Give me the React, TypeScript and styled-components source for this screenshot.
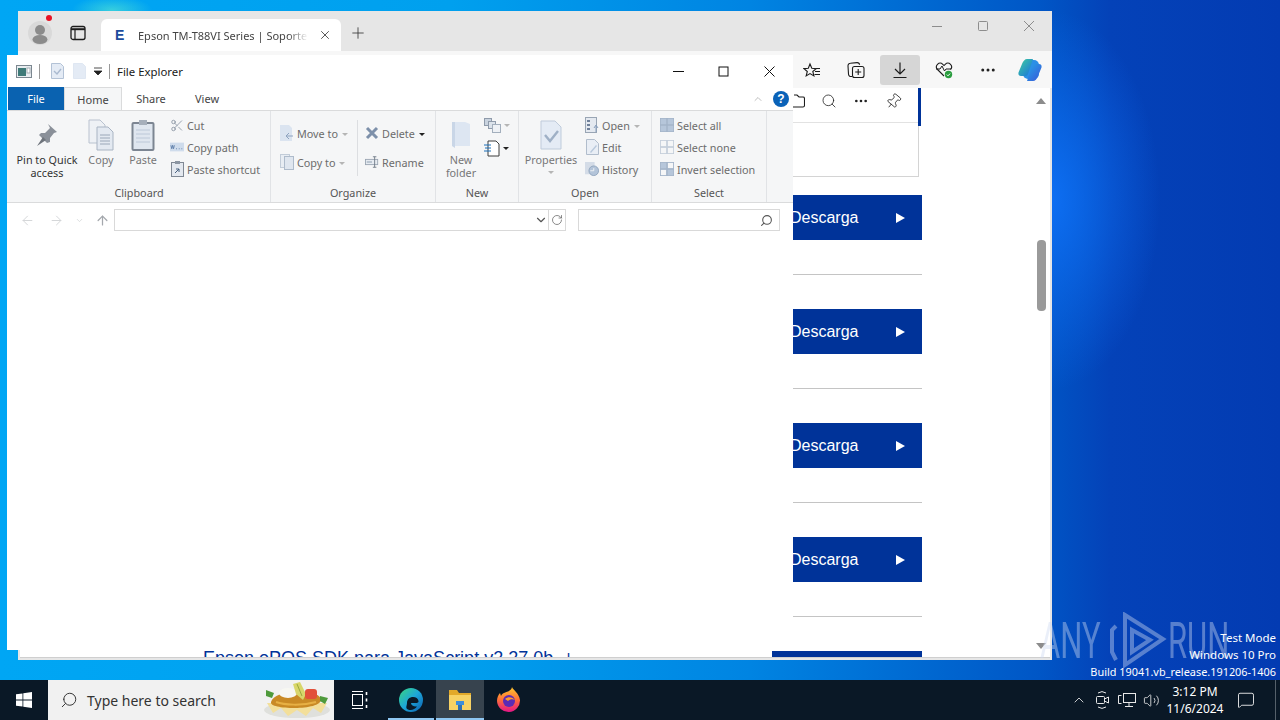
import React from 'react';
import styled, { createGlobalStyle } from 'styled-components';
import {
  ArrowLeft,
  ArrowRight,
  ArrowUp,
  ChevronDown,
  ChevronUp,
  MessageSquare,
  MoreHorizontal,
  Pin,
  Plus,
  RotateCw,
  Scissors,
  Search,
  Volume2,
  X,
} from 'lucide-react';

const UI_FONT = '"Noto Sans", "Open Sans", sans-serif';

const GlobalStyle = createGlobalStyle`
  html, body {
    margin: 0;
    padding: 0;
    overflow: hidden;
  }
  * {
    box-sizing: border-box;
  }
`;

const Desktop = styled.div`
  width: 1280px;
  height: 720px;
  display: flex;
  flex-direction: column;
  overflow: hidden;
  font-family: ${UI_FONT};
`;

const Wallpaper = styled.div`
  position: relative;
  flex: 1;
  background:
    radial-gradient(ellipse 110px 190px at 1050px 200px, rgba(14, 112, 245, 0.95), rgba(14, 112, 245, 0) 100%),
    radial-gradient(ellipse 40px 14px at 112px 10px, rgba(60, 210, 220, 0.9), rgba(60, 210, 220, 0) 100%),
    linear-gradient(90deg, #00a6f4 0, #00a0ee 450px, #0084e2 750px, #0056c6 1040px, #0442b8 1110px, #033bb2 1280px);
`;

/* browser window behind the explorer */
const BrowserWindow = styled.div`
  position: absolute;
  left: 18px;
  top: 11px;
  width: 1034px;
  height: 649px;
  display: flex;
  flex-direction: column;
  background: #e6e6e6;
  overflow: hidden;
`;

const TabStrip = styled.div`
  height: 40px;
  display: flex;
  align-items: flex-end;
  padding-left: 8px;
`;

const StripSlot = styled.div<{ $w: number }>`
  position: relative;
  width: ${(p) => p.$w}px;
  height: 34px;
  display: flex;
  align-items: center;
  justify-content: center;
  margin-bottom: 1px;
  color: #333;
`;

const NotifyDot = styled.span`
  position: absolute;
  top: -1px;
  left: 20px;
  width: 6px;
  height: 6px;
  border-radius: 50%;
  background: #e81123;
`;

const BrowserTab = styled.div`
  width: 240px;
  height: 32px;
  display: flex;
  align-items: center;
  background: #fff;
  border-radius: 6px 6px 0 0;
  padding: 0 9px 0 14px;
  margin-left: -1px;
`;

const TabFavicon = styled.span`
  width: 23px;
  font: bold 14px "Liberation Sans", sans-serif;
  color: #1d4c9c;
`;

const TabTitle = styled.span`
  width: 170px;
  font-size: 11px;
  white-space: nowrap;
  overflow: hidden;
  color: #444;
  -webkit-mask-image: linear-gradient(90deg, #000 150px, transparent 170px);
  mask-image: linear-gradient(90deg, #000 150px, transparent 170px);
`;

const TabClose = styled.span`
  margin-left: auto;
  display: flex;
  color: #333;
`;

const WinButtons = styled.div`
  margin-left: auto;
  align-self: flex-start;
  display: flex;
  color: #8d8d8d;
`;

const WinButton = styled.span`
  width: 46px;
  height: 30px;
  display: flex;
  align-items: center;
  justify-content: center;
`;

const BrowserToolbar = styled.div`
  height: 37px;
  display: flex;
  align-items: center;
  justify-content: flex-end;
  padding-right: 2px;
  background: #f7f7f7;
`;

const ToolButton = styled.span<{ $active?: boolean; $tight?: boolean }>`
  width: 40px;
  height: 30px;
  margin-left: ${(p) => (p.$tight ? 2 : 4)}px;
  display: flex;
  align-items: center;
  justify-content: center;
  border-radius: 3px;
  color: #222;
  background: ${(p) => (p.$active ? '#d6d6d6' : 'transparent')};
`;

const PageArea = styled.div`
  flex: 1;
  display: flex;
  margin: 0 2px 2px;
  background: #fff;
  border-bottom: 1px solid #cfcfcf;
  overflow: hidden;
`;

const PageColumn = styled.div`
  width: 719px;
  margin-left: 183px;
  display: flex;
  flex-direction: column;
`;

const SidePanel = styled.div`
  flex-shrink: 0;
  height: 89px;
  margin-right: 3px;
  margin-bottom: 18px;
  border-right: 1px solid #d4d4d4;
  border-bottom: 1px solid #d4d4d4;
  position: relative;
`;

const PanelTools = styled.div`
  height: 35px;
  display: flex;
  align-items: center;
  justify-content: flex-end;
  gap: 16px;
  padding: 0 16px 8px 0;
  border-bottom: 1px solid #e2e2e2;
  color: #222;
`;

const PanelAccent = styled.span`
  position: absolute;
  top: 0;
  right: -3px;
  width: 3px;
  height: 38px;
  background: #003399;
`;

const DownloadRow = styled.div<{ $last?: boolean }>`
  display: flex;
  align-items: flex-start;
  flex-shrink: 0;
  padding-bottom: ${(p) => (p.$last ? 0 : 34)}px;
  margin-bottom: ${(p) => (p.$last ? 0 : 34)}px;
  border-bottom: ${(p) => (p.$last ? 'none' : '1px solid #c4c4c4')};
`;

const DownloadLink = styled.a`
  font: 18px/15px "Liberation Sans", sans-serif;
  color: #003399;
  white-space: nowrap;
`;

const DownloadButton = styled.span`
  margin-left: auto;
  width: 150px;
  height: 45px;
  flex-shrink: 0;
  display: flex;
  align-items: center;
  justify-content: space-between;
  padding: 0 17px 0 18px;
  background: #003399;
  color: #fff;
  font: 16px "Liberation Sans", sans-serif;
`;

const PlayMark = styled.span`
  width: 0;
  height: 0;
  border-left: 9px solid #fff;
  border-top: 5.5px solid transparent;
  border-bottom: 5.5px solid transparent;
`;

const ScrollTrack = styled.div`
  width: 12px;
  margin-left: auto;
  margin-right: 3px;
  display: flex;
  flex-direction: column;
  align-items: center;
  padding-top: 10px;
`;

const ScrollArrowUp = styled.span`
  border-left: 5px solid transparent;
  border-right: 5px solid transparent;
  border-bottom: 6px solid #8c8c8c;
`;

const ScrollThumb = styled.span`
  width: 9px;
  height: 71px;
  margin-top: 136px;
  border-radius: 4px;
  background: #9a9a9a;
`;

const ScrollArrowDown = styled.span`
  margin-top: auto;
  margin-bottom: 8px;
  border-left: 5px solid transparent;
  border-right: 5px solid transparent;
  border-top: 6px solid #8c8c8c;
`;

/* file explorer, on top */
const ExplorerWindow = styled.div`
  position: absolute;
  left: 7px;
  top: 55px;
  width: 786px;
  height: 595px;
  display: flex;
  flex-direction: column;
  background: #fff;
`;

const TitleBar = styled.div`
  height: 32px;
  display: flex;
  align-items: center;
  padding-left: 9px;
  color: #1a1a1a;
`;

const TitleSep = styled.span<{ $ml: number }>`
  width: 1px;
  height: 15px;
  margin-left: ${(p) => p.$ml}px;
  background: #9a9a9a;
`;

const TitleText = styled.span`
  margin-left: 7px;
  font-size: 11.4px;
`;

const QuickIcon = styled.span<{ $ml: number }>`
  display: flex;
  margin-left: ${(p) => p.$ml}px;
`;

const ExplorerControls = styled.div`
  margin-left: auto;
  display: flex;
  padding-right: 1px;
  color: #111;
`;

const ExplorerControl = styled.span`
  width: 45.5px;
  height: 32px;
  display: flex;
  align-items: center;
  justify-content: center;
`;

const TabRow = styled.div`
  height: 23px;
  display: flex;
  align-items: stretch;
  padding-left: 1px;
  position: relative;
`;

const RibbonTab = styled.span<{ $w: number; $kind?: 'file' | 'active' }>`
  width: ${(p) => p.$w}px;
  display: flex;
  align-items: center;
  justify-content: center;
  font-size: 11px;
  color: ${(p) => (p.$kind === 'file' ? '#fff' : '#444')};
  background: ${(p) => (p.$kind === 'file' ? '#0a62b0' : p.$kind === 'active' ? '#f5f6f7' : 'transparent')};
  border: ${(p) => (p.$kind === 'active' ? '1px solid #dadbdc' : 'none')};
  border-bottom: none;
`;

const RibbonRight = styled.div`
  margin-left: auto;
  display: flex;
  align-items: center;
  gap: 9px;
  padding-right: 4px;
  color: #a9a9a9;
`;

const HelpBadge = styled.span`
  width: 16px;
  height: 16px;
  border-radius: 50%;
  background: #0a62b8;
  color: #fff;
  display: flex;
  align-items: center;
  justify-content: center;
  font: bold 12px "Liberation Sans", sans-serif;
`;

const Ribbon = styled.div`
  height: 93px;
  display: flex;
  padding-left: 1px;
  padding-right: 26px;
  background: #f5f6f7;
  border-top: 1px solid #dadbdc;
  border-bottom: 1px solid #dadbdc;
`;

const Group = styled.div<{ $w: number }>`
  width: ${(p) => p.$w}px;
  display: flex;
  flex-direction: column;
  padding-top: 3px;
  border-right: 1px solid #e1e3e6;
`;

const GroupBody = styled.div<{ $pl?: number }>`
  height: 66px;
  display: flex;
  padding-left: ${(p) => p.$pl ?? 0}px;
`;

const GroupLabel = styled.div`
  height: 16px;
  margin-top: 5px;
  text-align: center;
  font-size: 10.8px;
  line-height: 16px;
  color: #555;
`;

const LargeButton = styled.div<{ $w: number; $dim?: boolean }>`
  width: ${(p) => p.$w}px;
  display: flex;
  flex-direction: column;
  align-items: center;
  padding-top: 3px;
  text-align: center;
  font-size: 10.8px;
  line-height: 13px;
  color: ${(p) => (p.$dim ? '#777' : '#333')};
`;

const LargeIcon = styled.span`
  height: 36px;
  display: flex;
  align-items: center;
  justify-content: center;
  flex-shrink: 0;
`;

const SmallColumn = styled.div<{ $w?: number; $gap?: number; $pt?: number; $ml?: number; $divider?: boolean }>`
  width: ${(p) => (p.$w !== undefined ? `${p.$w}px` : 'auto')};
  display: flex;
  flex-direction: column;
  gap: ${(p) => p.$gap ?? 0}px;
  padding-top: ${(p) => p.$pt ?? 0}px;
  height: ${(p) => (p.$divider ? '56px' : 'auto')};
  margin-top: ${(p) => (p.$divider ? '6px' : '0')};
  margin-left: ${(p) => p.$ml ?? 0}px;
  border-right: ${(p) => (p.$divider ? '1px solid #dcdee1' : 'none')};
`;

const SmallRow = styled.div`
  height: 22px;
  display: flex;
  align-items: center;
  gap: 3px;
  font-size: 10.8px;
  white-space: nowrap;
  color: #6c6c6c;
`;

const SmallIcon = styled.span`
  width: 14px;
  height: 16px;
  display: flex;
  align-items: center;
  justify-content: center;
  flex-shrink: 0;
`;

const CaretDown = styled.span<{ $dark?: boolean; $ml?: number; $mt?: number }>`
  display: inline-block;
  vertical-align: middle;
  margin-left: ${(p) => p.$ml ?? 0}px;
  margin-top: ${(p) => p.$mt ?? 0}px;
  border-left: 3px solid transparent;
  border-right: 3px solid transparent;
  border-top: 3px solid ${(p) => (p.$dark ? '#222' : '#b5b5b5')};
`;

const AddressBar = styled.div`
  height: 34px;
  display: flex;
  align-items: center;
`;

const NavSet = styled.div`
  width: 107px;
  display: flex;
  align-items: center;
  padding-left: 13px;
  gap: 14px;
  color: #d2d4d6;
`;

const AddressBox = styled.div`
  width: 452px;
  height: 22px;
  display: flex;
  align-items: center;
  justify-content: flex-end;
  border: 1px solid #d9d9d9;
  color: #555;
`;

const RefreshCell = styled.span`
  width: 17px;
  height: 20px;
  margin-left: 0;
  display: flex;
  align-items: center;
  justify-content: center;
  border-left: 1px solid #d9d9d9;
  color: #666;
`;

const SearchBox = styled.div`
  width: 202px;
  height: 22px;
  margin-left: 12px;
  display: flex;
  align-items: center;
  justify-content: flex-end;
  padding-right: 6px;
  border: 1px solid #d9d9d9;
  color: #555;
`;

/* desktop overlays */
const Watermark = styled.div`
  position: absolute;
  left: 1040px;
  top: 612px;
  display: flex;
  align-items: center;
  color: rgba(205, 218, 240, 0.42);
  font: 400 50px/56px Roboto, sans-serif;
`;

const WatermarkWord = styled.span<{ $w: number }>`
  display: inline-block;
  width: ${(p) => p.$w}px;
  transform: scaleX(0.62);
  transform-origin: left center;
  white-space: nowrap;
`;

const TestMode = styled.div`
  position: absolute;
  right: 4px;
  bottom: 0;
  text-align: right;
  color: #fff;
  font-size: 11.5px;
  line-height: 17px;
`;

const BuildLine = styled.span`
  font-size: 10.9px;
`;

/* taskbar */
const Taskbar = styled.div`
  height: 40px;
  display: flex;
  align-items: stretch;
  background: #0a1826;
  color: #fff;
`;

const StartButton = styled.div`
  width: 48px;
  display: flex;
  align-items: center;
  justify-content: center;
`;

const SearchField = styled.div`
  width: 286px;
  display: flex;
  align-items: center;
  padding-left: 12px;
  background: #f1f1f1;
  color: #333;
  font-size: 14px;
`;

const SearchHint = styled.span`
  margin-left: 9px;
`;

const SearchDoodle = styled.span`
  display: flex;
  margin-left: auto;
  margin-right: 2px;
`;

const TaskItem = styled.div<{ $w: number; $active?: boolean; $open?: boolean }>`
  position: relative;
  width: ${(p) => p.$w}px;
  display: flex;
  align-items: center;
  justify-content: center;
  background: ${(p) => (p.$active ? '#37434e' : 'transparent')};
  &::after {
    content: '';
    display: ${(p) => (p.$open ? 'block' : 'none')};
    position: absolute;
    left: ${(p) => (p.$active ? 0 : 2)}px;
    right: ${(p) => (p.$active ? 0 : 2)}px;
    bottom: 0;
    height: 2px;
    background: #8fc7f2;
  }
`;

const Tray = styled.div`
  margin-left: auto;
  display: flex;
  align-items: center;
  padding-right: 4px;
`;

const TraySlot = styled.span`
  width: 24px;
  display: flex;
  justify-content: center;
  color: #e8e8e8;
`;

const Clock = styled.div`
  width: 72px;
  margin-left: -4px;
  text-align: center;
  font-size: 12px;
  line-height: 17px;
  color: #fff;
`;

const NotifySlot = styled.span`
  width: 45px;
  height: 40px;
  display: flex;
  align-items: center;
  justify-content: center;
  padding-right: 14px;
  border-right: 1px solid #55606a;
`;

/* drawn icons */
const PinIcon = () => (
  <svg width="24" height="26" viewBox="0 0 24 26">
    <path d="M13 2l9 8-3 1-4 5 0 4-3 1-8-8 2-2 4 0 5-5z" fill="#8a9099" />
    <path d="M8 15l-6 9 9-6z" fill="#6e747c" />
  </svg>
);

const CopyDocs = () => (
  <svg width="26" height="32" viewBox="0 0 26 32">
    <path d="M1 1h11l5 5v18H1z" fill="#eef1f5" stroke="#b9c2cf" />
    <path d="M9 8h11l5 5v18H9z" fill="#e3e9f1" stroke="#a9b4c3" />
    <path d="M12 16h10M12 19h10M12 22h10M12 25h10" stroke="#9aa7b8" />
  </svg>
);

const PasteBoard = () => (
  <svg width="24" height="32" viewBox="0 0 24 32">
    <rect x="1.5" y="4" width="21" height="27" rx="1" fill="#dfe6ef" stroke="#7c8592" strokeWidth="2" />
    <rect x="8" y="1" width="8" height="5" fill="#a6afbb" />
    <path d="M5 11h14M5 15h14M5 19h14M5 23h14" stroke="#bcc8d8" />
  </svg>
);

const CopyPathIcon = () => (
  <svg width="16" height="10" viewBox="0 0 16 10">
    <rect width="16" height="10" fill="#cfdcec" />
    <path d="M1 3l1 4 1-4 1 4 1-4M7 7h1M10 7h1M13 7h1" stroke="#5c7da8" fill="none" />
  </svg>
);

const ShortcutIcon = () => (
  <svg width="13" height="16" viewBox="0 0 13 16">
    <rect x="0.5" y="1.5" width="12" height="14" fill="#e3e8ef" stroke="#7f8894" />
    <rect x="4" y="0" width="5" height="3" fill="#8b95a2" />
    <path d="M4 12l4-4M5 8h3v3" stroke="#47607f" fill="none" />
  </svg>
);

const MoveIcon = () => (
  <svg width="14" height="16" viewBox="0 0 14 16">
    <path d="M0 0h9l3 3v13H0z" fill="#dbe4f0" />
    <path d="M6 11h7M6 11l3-3M6 11l3 3" stroke="#8ea3bf" fill="none" />
  </svg>
);

const CopyToIcon = () => (
  <svg width="14" height="16" viewBox="0 0 14 16">
    <rect x="0.5" y="0.5" width="9" height="13" fill="#e8edf3" stroke="#c2ccd8" />
    <rect x="4.5" y="2.5" width="9" height="13" fill="#dfe6ef" stroke="#aebbcb" />
  </svg>
);

const DeleteIcon = () => (
  <svg width="14" height="14" viewBox="0 0 14 14">
    <path d="M2 2l10 10M12 2L2 12" stroke="#7d90aa" strokeWidth="3" />
  </svg>
);

const RenameIcon = () => (
  <svg width="16" height="14" viewBox="0 0 16 14">
    <rect x="0.5" y="4" width="14" height="6" fill="#e6ebf1" stroke="#98a3b1" />
    <path d="M2 7h6" stroke="#8494a8" />
    <path d="M9 1h4M11 1v12M9 13h4" stroke="#6b7684" fill="none" />
  </svg>
);

const NewFolderIcon = () => (
  <svg width="24" height="30" viewBox="0 0 24 30">
    <path d="M3 2h13l5 2v22l-18 0z" fill="#dde6f2" />
    <path d="M3 2h3v26l-3-2z" fill="#c9d6e7" />
  </svg>
);

const NewItemIcon = () => (
  <svg width="17" height="15" viewBox="0 0 17 15">
    <rect x="0.5" y="0.5" width="7" height="7" fill="#c9d3df" stroke="#8f9bab" />
    <rect x="4.5" y="3.5" width="7" height="7" fill="#dbe2ea" stroke="#8f9bab" />
    <rect x="8.5" y="6.5" width="8" height="8" fill="#eef1f5" stroke="#a3afbd" />
  </svg>
);

const EasyAccessIcon = () => (
  <svg width="16" height="17" viewBox="0 0 16 17">
    <path d="M4 1h8l3 3v12H4z" fill="#fff" stroke="#3d3d3d" />
    <path d="M0 5h7M1 8h6M0 11h7" stroke="#1b6fb8" />
  </svg>
);

const PropertiesIcon = () => (
  <svg width="22" height="30" viewBox="0 0 22 30">
    <path d="M1 1h14l6 6v22H1z" fill="#e4ebf5" stroke="#bfcbdb" />
    <path d="M5 15l5 6 8-10" fill="none" stroke="#9fb0c6" strokeWidth="2.4" />
  </svg>
);

const OpenIcon = () => (
  <svg width="14" height="16" viewBox="0 0 14 16">
    <rect x="0.5" y="0.5" width="11" height="15" fill="#e4e9f0" stroke="#99a5b4" />
    <path d="M2 3h3v2H2zM2 7h3v2H2zM2 11h3v2H2z" fill="#6f8099" />
    <path d="M11 15V9M9 11l2-3 2 3" stroke="#8aa0bd" fill="none" />
  </svg>
);

const EditIcon = () => (
  <svg width="13" height="16" viewBox="0 0 13 16">
    <path d="M0.5 0.5h8l4 4v11H0.5z" fill="#e9eef5" stroke="#b1bdcc" />
    <path d="M4 13l6-7 1 1-6 7z" fill="#b8c8dc" />
  </svg>
);

const HistoryIcon = () => (
  <svg width="16" height="16" viewBox="0 0 16 16">
    <rect width="11" height="14" fill="#d4dce7" />
    <circle cx="10" cy="10" r="5.5" fill="#b3c4d9" stroke="#8ea2bc" />
    <path d="M6 10h4V7" stroke="#f5f6f7" fill="none" />
  </svg>
);

const SelectGrid = ({ fill, stroke, invert }: { fill: string; stroke: string; invert?: boolean }) => (
  <svg width="16" height="16" viewBox="0 0 16 16">
    <rect x="0.5" y="0.5" width="7" height="7" fill={fill} stroke={stroke} />
    <rect x="8.5" y="0.5" width="7" height="7" fill={invert ? '#f5f6f7' : fill} stroke={stroke} />
    <rect x="0.5" y="8.5" width="7" height="7" fill={invert ? '#f5f6f7' : fill} stroke={stroke} />
    <rect x="8.5" y="8.5" width="7" height="7" fill={fill} stroke={stroke} />
  </svg>
);

const ExplorerAppIcon = () => (
  <svg width="16" height="13" viewBox="0 0 16 13">
    <rect x="0.5" y="0.5" width="15" height="12" fill="#e9edf0" stroke="#7c8790" />
    <rect x="2" y="3" width="8" height="8" fill="#3f7a78" />
    <rect x="11" y="3" width="3" height="5" fill="#fff" stroke="#a5adb3" />
  </svg>
);

const QuickDoc = ({ check }: { check?: boolean }) => (
  <svg width="13" height="16" viewBox="0 0 13 16">
    <path d="M0.5 0.5h9l3 3v12H0.5z" fill="#e4ebf5" stroke={check ? '#b3c2d6' : '#dfe7f2'} />
    {check && <path d="M3 8l3 3 4-5" stroke="#a9b9cf" fill="none" strokeWidth="1.4" />}
  </svg>
);

const ProfileIcon = () => (
  <svg width="24" height="24" viewBox="0 0 24 24">
    <circle cx="12" cy="12" r="12" fill="#d9d9d9" />
    <circle cx="12" cy="9" r="5" fill="#8b8b8b" />
    <ellipse cx="12" cy="18.5" rx="7.5" ry="4.5" fill="#8b8b8b" />
  </svg>
);

const TabViewIcon = () => (
  <svg width="16" height="16" viewBox="0 0 16 16">
    <rect x="1" y="1.5" width="14" height="13" rx="2" fill="none" stroke="#1c1c1c" strokeWidth="1.3" />
    <path d="M1 4.2h14" stroke="#1c1c1c" strokeWidth="2" />
    <path d="M5 4v10" stroke="#1c1c1c" strokeWidth="1.2" />
  </svg>
);

const FavoritesIcon = () => (
  <svg width="18" height="18" viewBox="0 0 18 18" fill="none" stroke="#1c1c1c" strokeWidth="1.1">
    <path d="M7 1.5l1.8 4.3 4.4.3-3.4 2.9 1.1 4.4L7 11.1 3.2 13.4l1.1-4.4L1 6.1l4.3-.3z" transform="translate(0 1.5)" />
    <path d="M12.5 7.5H17M12 10.5h5M11.5 13.5H17" />
  </svg>
);

const CollectionsIcon = () => (
  <svg width="18" height="18" viewBox="0 0 18 18" fill="none" stroke="#1c1c1c" strokeWidth="1.1">
    <path d="M5 15.5H4a2.5 2.5 0 0 1-2.5-2.5L1 5a2.5 2.5 0 0 1 2.3-2.7L10 1.6a2.5 2.5 0 0 1 2.6 2.2" />
    <rect x="5.5" y="5.5" width="11.5" height="11" rx="2" />
    <path d="M11.2 8v6M8.2 11h6" />
  </svg>
);

const DownloadIcon = () => (
  <svg width="18" height="18" viewBox="0 0 18 18" fill="none" stroke="#1c1c1c" strokeWidth="1.2">
    <path d="M9 1.5v11.5M4 8l5 5 5-5M2.5 16.5h13" />
  </svg>
);

const HealthIcon = () => (
  <svg width="18" height="18" viewBox="0 0 18 18" fill="none">
    <path d="M9 15L2.5 8.500a3.800 3.800 0 0 1 0-5.200 3.800 3.800 0 0 1 5.300 0L9 4.400l1.200-1.100a3.800 3.800 0 0 1 5.300 0 3.800 3.800 0 0 1 0 5.200" stroke="#1c1c1c" strokeWidth="1.1" />
    <path d="M1 8h4l2-3 2.500 5 1.500-2h5" stroke="#1c1c1c" strokeWidth="1" />
    <circle cx="13.5" cy="13.5" r="3.7" fill="#2a9d3f" />
    <path d="M11.800 13.600l1.200 1.200 2.100-2.200" stroke="#fff" />
  </svg>
);

const CopilotIcon = () => (
  <svg width="24" height="24" viewBox="0 0 24 24">
    <defs>
      <linearGradient id="cpA" x1="0" y1="0" x2="1" y2="1">
        <stop offset="0" stopColor="#3ecf9c" />
        <stop offset="1" stopColor="#1a6fe0" />
      </linearGradient>
      <linearGradient id="cpB" x1="0" y1="0" x2="1" y2="1">
        <stop offset="0" stopColor="#24a6e8" />
        <stop offset="1" stopColor="#3b55d8" />
      </linearGradient>
    </defs>
    <rect x="5" y="2" width="16" height="19" rx="5" fill="#2b8fe6" />
    <path d="M9 1h6l-5 15c-.5 1.600-1.600 2-3 2H3c-2 0-3-1.500-2.500-3.500L4 6c1-3 3-5 5-5z" fill="url(#cpA)" />
    <path d="M15 23H9l5-15c.5-1.600 1.600-2 3-2h4c2 0 3 1.500 2.500 3.500L20 18c-1 3-3 5-5 5z" fill="url(#cpB)" />
  </svg>
);

const FolderOutline = () => (
  <svg width="14" height="14" viewBox="0 0 14 14" fill="none" stroke="#1c1c1c" strokeWidth="1.1">
    <path d="M3 1h3l2 2h4a1.500 1.500 0 0 1 1.500 1.500v7A1.500 1.500 0 0 1 12 13H2A1.500 1.500 0 0 1 .5 11.500" />
  </svg>
);

const WindowsLogo = () => (
  <svg width="16" height="16" viewBox="0 0 16 16" fill="#fff">
    <path d="M0 2.300l6.500-.9v6.200H0zM7.300 1.300L16 0v7.600H7.300zM0 8.400h6.500v6.200L0 13.700zM7.300 8.400H16V16l-8.700-1.200z" />
  </svg>
);

const TaskViewIcon = () => (
  <svg width="16" height="18" viewBox="0 0 16 18" fill="none" stroke="#fff">
    <path d="M0 .5h11M0 17.500h11" />
    <rect x="0.500" y="3.500" width="10" height="11" />
    <path d="M14.500 1v3M14.500 7.500v3M14.500 14v3" strokeWidth="1.600" />
  </svg>
);

const EdgeIcon = () => (
  <svg width="24" height="24" viewBox="0 0 24 24">
    <defs>
      <linearGradient id="edgeA" x1="0" y1="0" x2="1" y2="1">
        <stop offset="0" stopColor="#39d67f" />
        <stop offset="0.5" stopColor="#1da6d8" />
        <stop offset="1" stopColor="#0d5fb0" />
      </linearGradient>
    </defs>
    <circle cx="12" cy="12" r="12" fill="url(#edgeA)" />
    <path d="M8 15c0-4 3-6 6-6 3 0 5 1.500 5.500 4 .3 1.500-1 2-3 2h-4.500c0 2.500 3 4 6 3.500-2 3-6 4.500-9 3S8 18 8 15z" fill="#0a1826" />
  </svg>
);

const FolderTaskIcon = () => (
  <svg width="24" height="22" viewBox="0 0 24 22">
    <path d="M1 1h8l2 3h12v4H1z" fill="#e2a92a" />
    <rect x="1" y="6" width="22" height="15" fill="#f7d264" />
    <path d="M8 12h8v4H8z" fill="#3d8edb" />
    <path d="M10 16h4v5h-4z" fill="#2f6fb3" />
  </svg>
);

const FirefoxIcon = () => (
  <svg width="24" height="26" viewBox="0 0 24 26">
    <defs>
      <linearGradient id="ffA" x1="0.500" y1="0" x2="0.500" y2="1">
        <stop offset="0" stopColor="#ffc82c" />
        <stop offset="0.5" stopColor="#ff7139" />
        <stop offset="1" stopColor="#e31587" />
      </linearGradient>
    </defs>
    <path d="M15 0c1 3 7 6 8 13a11.500 11.500 0 1 1-23 1c0-3 1-6 3-8l1 3c1-3 6-4 8-5 1-1 3-2 3-4z" fill="url(#ffA)" />
    <circle cx="12" cy="14" r="6" fill="#5b2bb5" />
    <path d="M8 12c3-3 8-2 10 1-2-1-5-1-7 1z" fill="#ff9a2e" />
  </svg>
);

const NachosDoodle = () => (
  <svg width="70" height="38" viewBox="0 0 70 38">
    <ellipse cx="35" cy="29" rx="33" ry="8" fill="#dfe0dc" />
    <path d="M5 22l6 10 8-5 7 8 9-6 9 6 7-8 8 5 6-10z" fill="#f3df9a" />
    <path d="M9 21c2-7 15-11 31-10 11 0 19 3 19 8 0 5-13 8-26 8-14 0-25-2-24-6z" fill="#c98a25" />
    <path d="M14 21c8 3 26 4 40 0" stroke="#e7b044" strokeWidth="2" fill="none" />
    <ellipse cx="26" cy="12" rx="9" ry="5" fill="#f7f7f2" />
    <path d="M31 3l7-2 6 12-3 6-7-6z" fill="#d8d66a" />
    <path d="M35 3l5 12" stroke="#9aa83c" />
    <rect x="43" y="8" width="12" height="10" rx="3" fill="#e2503a" />
    <path d="M4 9l8 3-2 5-6-2zM58 15l8 2-3 6-5-3z" fill="#4f9a3c" />
  </svg>
);

const MeetIcon = () => (
  <svg width="16" height="18" viewBox="0 0 16 18" fill="none" stroke="#e8e8e8">
    <path d="M3 2a7 7 0 0 1 8 0M3 16a7 7 0 0 0 8 0" />
    <rect x="1.500" y="5.500" width="8" height="7" rx="1" />
    <path d="M9.500 8l4-2v6l-4-2" />
  </svg>
);

const NetworkIcon = () => (
  <svg width="18" height="16" viewBox="0 0 18 16" fill="none" stroke="#e8e8e8">
    <rect x="5.500" y="1.500" width="12" height="9" />
    <path d="M11 11v3M7 14.500h8M.5 3.500h3M.5 3.500v8h3" />
  </svg>
);

const AnyRunMark = () => (
  <svg width="60" height="58" viewBox="0 0 60 58" fill="none" stroke="rgba(205,218,240,0.42)" strokeWidth="4">
    <path d="M8 14L4 18v22l4 8M17 3l38 24-38 26z" />
    <path d="M24 18l18 10-18 12z" />
  </svg>
);

const downloadRows = [0, 1, 2, 3];

const App: React.FC = () => {
  return (
    <Desktop>
      <GlobalStyle />
      <Wallpaper>
        <BrowserWindow>
          <TabStrip>
            <StripSlot $w={28}>
              <ProfileIcon />
              <NotifyDot />
            </StripSlot>
            <StripSlot $w={48}>
              <TabViewIcon />
            </StripSlot>
            <BrowserTab>
              <TabFavicon>E</TabFavicon>
              <TabTitle>Epson TM-T88VI Series | Soporte | Epson</TabTitle>
              <TabClose>
                <X size={14} strokeWidth={1.4} />
              </TabClose>
            </BrowserTab>
            <StripSlot $w={34}>
              <Plus size={18} strokeWidth={1.1} />
            </StripSlot>
            <WinButtons>
              <WinButton>
                <svg width="10" height="10" viewBox="0 0 10 10"><path d="M0 5.500h10" stroke="#8d8d8d" /></svg>
              </WinButton>
              <WinButton>
                <svg width="10" height="10" viewBox="0 0 10 10"><rect x="0.500" y="0.500" width="9" height="9" rx="1" fill="none" stroke="#8d8d8d" /></svg>
              </WinButton>
              <WinButton>
                <svg width="10" height="10" viewBox="0 0 10 10"><path d="M0 0l10 10M10 0L0 10" stroke="#8d8d8d" /></svg>
              </WinButton>
            </WinButtons>
          </TabStrip>
          <BrowserToolbar>
            <ToolButton><FavoritesIcon /></ToolButton>
            <ToolButton><CollectionsIcon /></ToolButton>
            <ToolButton $active><DownloadIcon /></ToolButton>
            <ToolButton><HealthIcon /></ToolButton>
            <ToolButton><MoreHorizontal size={18} strokeWidth={2} /></ToolButton>
            <ToolButton $tight><CopilotIcon /></ToolButton>
          </BrowserToolbar>
          <PageArea>
            <PageColumn>
              <SidePanel>
                <PanelTools>
                  <FolderOutline />
                  <Search size={16} strokeWidth={1.2} />
                  <MoreHorizontal size={16} strokeWidth={2} />
                  <Pin size={17} strokeWidth={1.1} style={{ transform: 'rotate(40deg)' }} />
                </PanelTools>
                <PanelAccent />
              </SidePanel>
              {downloadRows.map((row) => (
                <DownloadRow key={row}>
                  <DownloadButton>
                    Descarga
                    <PlayMark />
                  </DownloadButton>
                </DownloadRow>
              ))}
              <DownloadRow $last>
                <DownloadLink>Epson ePOS SDK para JavaScript v2.27.0b &nbsp;+</DownloadLink>
                <DownloadButton>
                  Descarga
                  <PlayMark />
                </DownloadButton>
              </DownloadRow>
            </PageColumn>
            <ScrollTrack>
              <ScrollArrowUp />
              <ScrollThumb />
              <ScrollArrowDown />
            </ScrollTrack>
          </PageArea>
        </BrowserWindow>

        <ExplorerWindow>
          <TitleBar>
            <ExplorerAppIcon />
            <TitleSep $ml={7} />
            <QuickIcon $ml={11}><QuickDoc check /></QuickIcon>
            <QuickIcon $ml={9}><QuickDoc /></QuickIcon>
            <QuickIcon $ml={8}>
              <svg width="8" height="8" viewBox="0 0 8 8"><path d="M0 1h8M0 4h8l-4 4z" stroke="#222" strokeWidth="0.800" fill="#222" /></svg>
            </QuickIcon>
            <TitleSep $ml={7} />
            <TitleText>File Explorer</TitleText>
            <ExplorerControls>
              <ExplorerControl>
                <svg width="11" height="11" viewBox="0 0 11 11"><path d="M0 5.500h11" stroke="#111" /></svg>
              </ExplorerControl>
              <ExplorerControl>
                <svg width="11" height="11" viewBox="0 0 11 11"><rect x="1" y="1" width="9" height="9" fill="none" stroke="#111" /></svg>
              </ExplorerControl>
              <ExplorerControl>
                <svg width="11" height="11" viewBox="0 0 11 11"><path d="M.5.500l10 10M10.500.500l-10 10" stroke="#111" /></svg>
              </ExplorerControl>
            </ExplorerControls>
          </TitleBar>
          <TabRow>
            <RibbonTab $w={56} $kind="file">File</RibbonTab>
            <RibbonTab $w={58} $kind="active">Home</RibbonTab>
            <RibbonTab $w={58}>Share</RibbonTab>
            <RibbonTab $w={54}>View</RibbonTab>
            <RibbonRight>
              <ChevronUp size={12} strokeWidth={1.500} />
              <HelpBadge>?</HelpBadge>
            </RibbonRight>
          </TabRow>
          <Ribbon>
            <Group $w={263}>
              <GroupBody>
                <LargeButton $w={78}>
                  <LargeIcon><PinIcon /></LargeIcon>
                  Pin to Quick access
                </LargeButton>
                <LargeButton $w={30} $dim>
                  <LargeIcon><CopyDocs /></LargeIcon>
                  Copy
                </LargeButton>
                <LargeButton $w={54} $dim>
                  <LargeIcon><PasteBoard /></LargeIcon>
                  Paste
                </LargeButton>
                <SmallColumn>
                  <SmallRow>
                    <SmallIcon><Scissors size={15} strokeWidth={1.300} color="#7c8898" /></SmallIcon>
                    Cut
                  </SmallRow>
                  <SmallRow>
                    <SmallIcon><CopyPathIcon /></SmallIcon>
                    Copy path
                  </SmallRow>
                  <SmallRow>
                    <SmallIcon><ShortcutIcon /></SmallIcon>
                    Paste shortcut
                  </SmallRow>
                </SmallColumn>
              </GroupBody>
              <GroupLabel>Clipboard</GroupLabel>
            </Group>
            <Group $w={165}>
              <GroupBody $pl={9}>
                <SmallColumn $w={77} $gap={7} $pt={8}>
                  <SmallRow>
                    <SmallIcon><MoveIcon /></SmallIcon>
                    <span>Move to <CaretDown $ml={1} /></span>
                  </SmallRow>
                  <SmallRow>
                    <SmallIcon><CopyToIcon /></SmallIcon>
                    <span>Copy to <CaretDown $ml={1} /></span>
                  </SmallRow>
                </SmallColumn>
                <SmallColumn $w={1} $divider />
                <SmallColumn $gap={7} $pt={8} $ml={7}>
                  <SmallRow>
                    <SmallIcon><DeleteIcon /></SmallIcon>
                    <span>Delete <CaretDown $dark $ml={1} /></span>
                  </SmallRow>
                  <SmallRow>
                    <SmallIcon><RenameIcon /></SmallIcon>
                    Rename
                  </SmallRow>
                </SmallColumn>
              </GroupBody>
              <GroupLabel>Organize</GroupLabel>
            </Group>
            <Group $w={83}>
              <GroupBody $pl={5}>
                <LargeButton $w={40} $dim>
                  <LargeIcon><NewFolderIcon /></LargeIcon>
                  New folder
                </LargeButton>
                <SmallColumn $gap={1} $pt={0} $ml={3}>
                  <SmallRow>
                    <NewItemIcon />
                    <CaretDown />
                  </SmallRow>
                  <SmallRow>
                    <EasyAccessIcon />
                    <CaretDown $dark />
                  </SmallRow>
                </SmallColumn>
              </GroupBody>
              <GroupLabel>New</GroupLabel>
            </Group>
            <Group $w={133}>
              <GroupBody $pl={4}>
                <LargeButton $w={56} $dim>
                  <LargeIcon><PropertiesIcon /></LargeIcon>
                  Properties
                  <CaretDown $mt={5} />
                </LargeButton>
                <SmallColumn $ml={6}>
                  <SmallRow>
                    <SmallIcon><OpenIcon /></SmallIcon>
                    <span>Open <CaretDown $ml={1} /></span>
                  </SmallRow>
                  <SmallRow>
                    <SmallIcon><EditIcon /></SmallIcon>
                    Edit
                  </SmallRow>
                  <SmallRow>
                    <SmallIcon><HistoryIcon /></SmallIcon>
                    History
                  </SmallRow>
                </SmallColumn>
              </GroupBody>
              <GroupLabel>Open</GroupLabel>
            </Group>
            <Group $w={115}>
              <GroupBody $pl={8}>
                <SmallColumn>
                  <SmallRow>
                    <SmallIcon><SelectGrid fill="#b6c6da" stroke="#a3b4ca" /></SmallIcon>
                    Select all
                  </SmallRow>
                  <SmallRow>
                    <SmallIcon><SelectGrid fill="#f5f6f7" stroke="#c5cfdb" /></SmallIcon>
                    Select none
                  </SmallRow>
                  <SmallRow>
                    <SmallIcon><SelectGrid fill="#b6c6da" stroke="#a3b4ca" invert /></SmallIcon>
                    Invert selection
                  </SmallRow>
                </SmallColumn>
              </GroupBody>
              <GroupLabel>Select</GroupLabel>
            </Group>
          </Ribbon>
          <AddressBar>
            <NavSet>
              <ArrowLeft size={15} strokeWidth={1.500} />
              <ArrowRight size={15} strokeWidth={1.500} />
              <ChevronDown size={9} strokeWidth={2} style={{ marginLeft: -3, marginRight: -3 }} />
              <ArrowUp size={15} strokeWidth={2} color="#a4a8ad" />
            </NavSet>
            <AddressBox>
              <ChevronDown size={14} strokeWidth={2} />
              <RefreshCell>
                <RotateCw size={12} strokeWidth={1.500} />
              </RefreshCell>
            </AddressBox>
            <SearchBox>
              <Search size={13} strokeWidth={2} style={{ transform: 'scaleX(-1)' }} />
            </SearchBox>
          </AddressBar>
        </ExplorerWindow>

        <Watermark>
          <WatermarkWord $w={68}>ANY</WatermarkWord>
          <AnyRunMark />
          <WatermarkWord $w={64}>RUN</WatermarkWord>
        </Watermark>
        <TestMode>
          Test Mode
          <br />
          Windows 10 Pro
          <br />
          <BuildLine>Build 19041.vb_release.191206-1406</BuildLine>
        </TestMode>
      </Wallpaper>
      <Taskbar>
        <StartButton><WindowsLogo /></StartButton>
        <SearchField>
          <Search size={18} strokeWidth={1.300} style={{ transform: 'scaleX(-1)' }} />
          <SearchHint>Type here to search</SearchHint>
          <SearchDoodle><NachosDoodle /></SearchDoodle>
        </SearchField>
        <TaskItem $w={52}><TaskViewIcon /></TaskItem>
        <TaskItem $w={50} $open><EdgeIcon /></TaskItem>
        <TaskItem $w={48} $active $open><FolderTaskIcon /></TaskItem>
        <TaskItem $w={50}><FirefoxIcon /></TaskItem>
        <Tray>
          <TraySlot><ChevronUp size={16} strokeWidth={1.300} /></TraySlot>
          <TraySlot><MeetIcon /></TraySlot>
          <TraySlot><NetworkIcon /></TraySlot>
          <TraySlot><Volume2 size={17} strokeWidth={1.200} /></TraySlot>
          <Clock>
            3:12 PM
            <br />
            11/6/2024
          </Clock>
          <NotifySlot><MessageSquare size={18} strokeWidth={1.200} color="#f0f0f0" /></NotifySlot>
        </Tray>
      </Taskbar>
    </Desktop>
  );
};

export default App;
